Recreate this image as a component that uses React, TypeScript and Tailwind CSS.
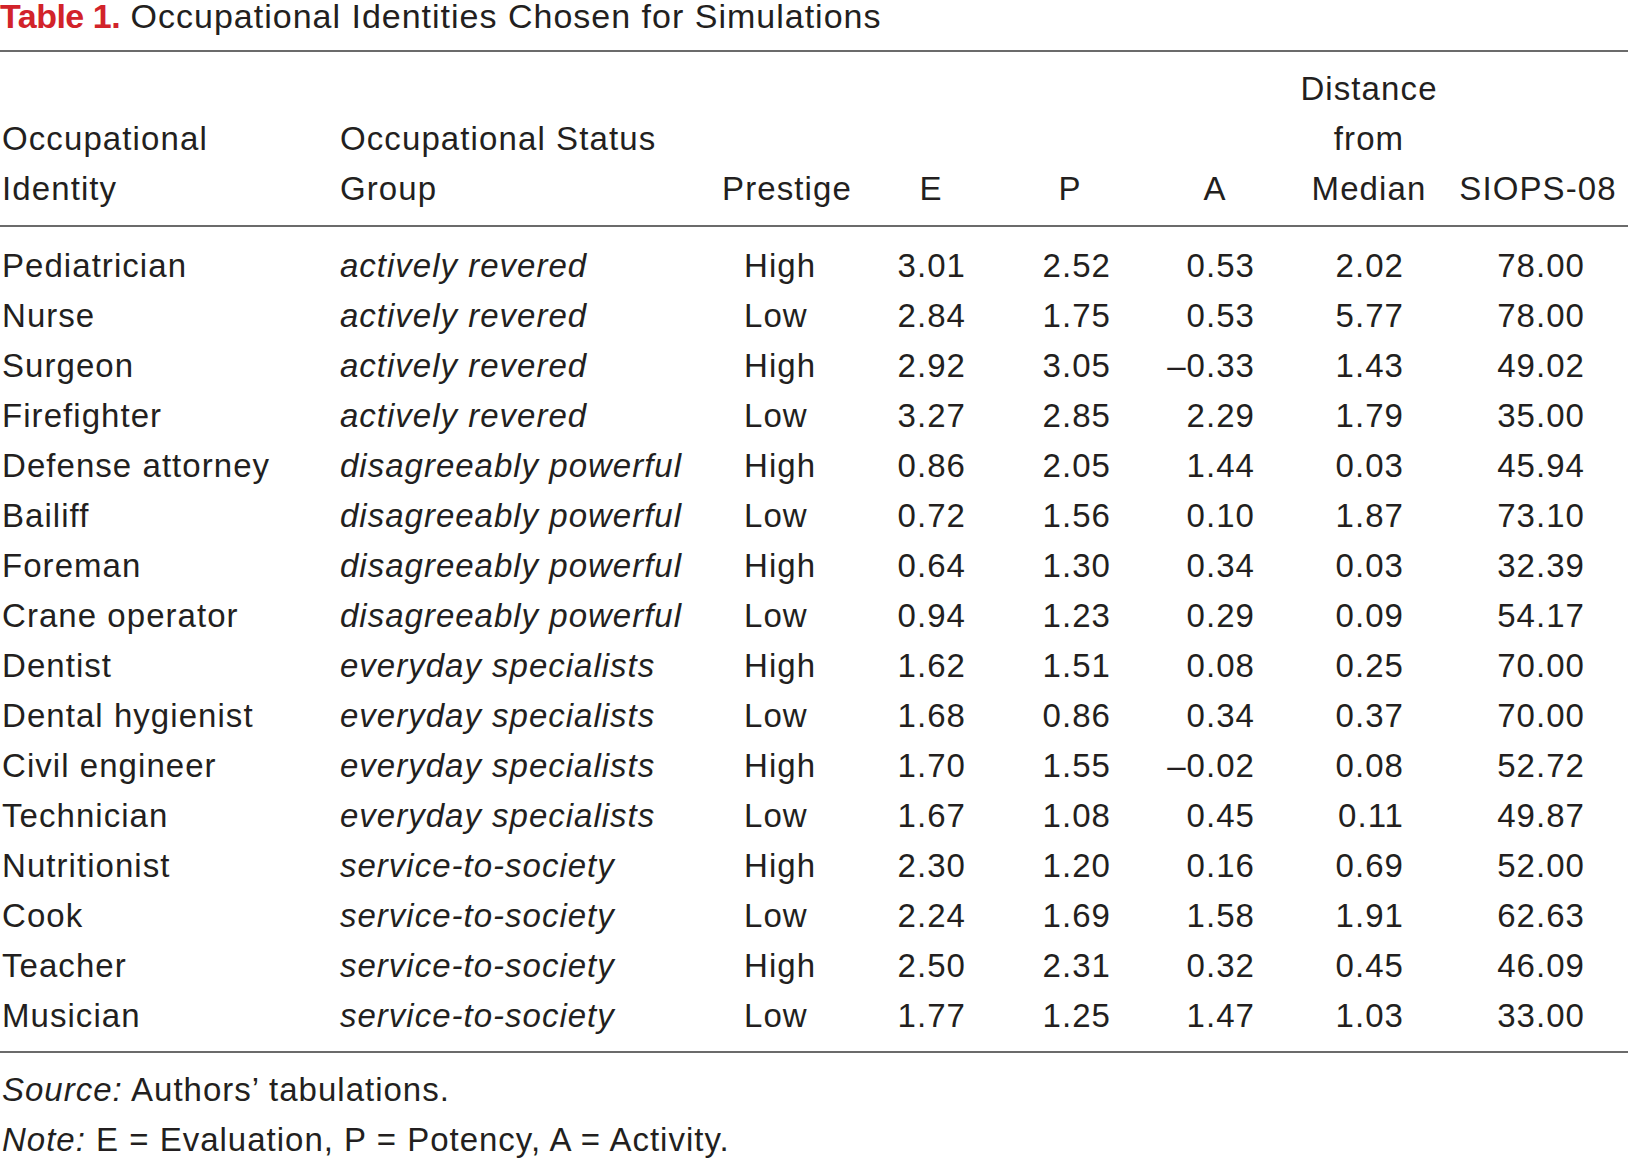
import React from 'react';

const rows: [string, string, string, string, string, string, string, string][] = [
  ['Pediatrician', 'actively revered', 'High', '3.01', '2.52', '0.53', '2.02', '78.00'],
  ['Nurse', 'actively revered', 'Low', '2.84', '1.75', '0.53', '5.77', '78.00'],
  ['Surgeon', 'actively revered', 'High', '2.92', '3.05', '–0.33', '1.43', '49.02'],
  ['Firefighter', 'actively revered', 'Low', '3.27', '2.85', '2.29', '1.79', '35.00'],
  ['Defense attorney', 'disagreeably powerful', 'High', '0.86', '2.05', '1.44', '0.03', '45.94'],
  ['Bailiff', 'disagreeably powerful', 'Low', '0.72', '1.56', '0.10', '1.87', '73.10'],
  ['Foreman', 'disagreeably powerful', 'High', '0.64', '1.30', '0.34', '0.03', '32.39'],
  ['Crane operator', 'disagreeably powerful', 'Low', '0.94', '1.23', '0.29', '0.09', '54.17'],
  ['Dentist', 'everyday specialists', 'High', '1.62', '1.51', '0.08', '0.25', '70.00'],
  ['Dental hygienist', 'everyday specialists', 'Low', '1.68', '0.86', '0.34', '0.37', '70.00'],
  ['Civil engineer', 'everyday specialists', 'High', '1.70', '1.55', '–0.02', '0.08', '52.72'],
  ['Technician', 'everyday specialists', 'Low', '1.67', '1.08', '0.45', '0.11', '49.87'],
  ['Nutritionist', 'service-to-society', 'High', '2.30', '1.20', '0.16', '0.69', '52.00'],
  ['Cook', 'service-to-society', 'Low', '2.24', '1.69', '1.58', '1.91', '62.63'],
  ['Teacher', 'service-to-society', 'High', '2.50', '2.31', '0.32', '0.45', '46.09'],
  ['Musician', 'service-to-society', 'Low', '1.77', '1.25', '1.47', '1.03', '33.00'],
];

const grid = 'grid grid-cols-[340px_372px_150px_138px_140px_150px_158px_180px]';

export default function App() {
  return (
    <div
      className="w-[1628px] h-[1158px] bg-white text-[#231f20] overflow-hidden"
      style={{ fontFamily: '"Liberation Sans", Arial, sans-serif' }}
    >
      {/* Caption */}
      <div className="h-[50px] text-[34px] leading-[32px] tracking-[1px] whitespace-nowrap">
        <span className="font-bold text-[#d2232a] tracking-[-0.5px]">Table 1.</span>{' '}
        Occupational Identities Chosen for Simulations
      </div>
      <div className="h-[2px] bg-[#6b6b6b]" />

      {/* Header */}
      <div className={`${grid} text-[33px] leading-[50px] tracking-[1.1px] pt-[12px] pb-[11px]`}>
        <div className="pl-[2px] pt-[50px]">Occupational<br />Identity</div>
        <div className="pt-[50px]">Occupational Status<br />Group</div>
        <div className="pt-[100px] text-center">Prestige</div>
        <div className="pt-[100px] text-center">E</div>
        <div className="pt-[100px] text-center">P</div>
        <div className="pt-[100px] text-center">A</div>
        <div className="text-center">Distance<br />from<br />Median</div>
        <div className="pt-[100px] text-center">SIOPS-08</div>
      </div>
      <div className="h-[2px] bg-[#6b6b6b]" />

      {/* Body */}
      <div className="pt-[14px] pb-[10px] text-[33px] leading-[50px] tracking-[1.05px]">
        {rows.map((r) => (
          <div key={r[0]} className={grid}>
            <div className="pl-[2px]">{r[0]}</div>
            <div className="italic tracking-[1px]">{r[1]}</div>
            <div className="pl-[32px]">{r[2]}</div>
            <div className="text-right pr-[34px]">{r[3]}</div>
            <div className="text-right pr-[29px]">{r[4]}</div>
            <div className="text-right pr-[35px]">{r[5]}</div>
            <div className="text-right pr-[44px]">{r[6]}</div>
            <div className="text-right pr-[43px]">{r[7]}</div>
          </div>
        ))}
      </div>
      <div className="h-[2px] bg-[#6b6b6b]" />

      {/* Footnotes */}
      <div className="pt-[12px] text-[33px] leading-[50px] tracking-[1px] pl-[2px]">
        <div>
          <span className="italic">Source:</span> Authors’ tabulations.
        </div>
        <div>
          <span className="italic">Note:</span> E = Evaluation, P = Potency, A = Activity.
        </div>
      </div>
    </div>
  );
}
